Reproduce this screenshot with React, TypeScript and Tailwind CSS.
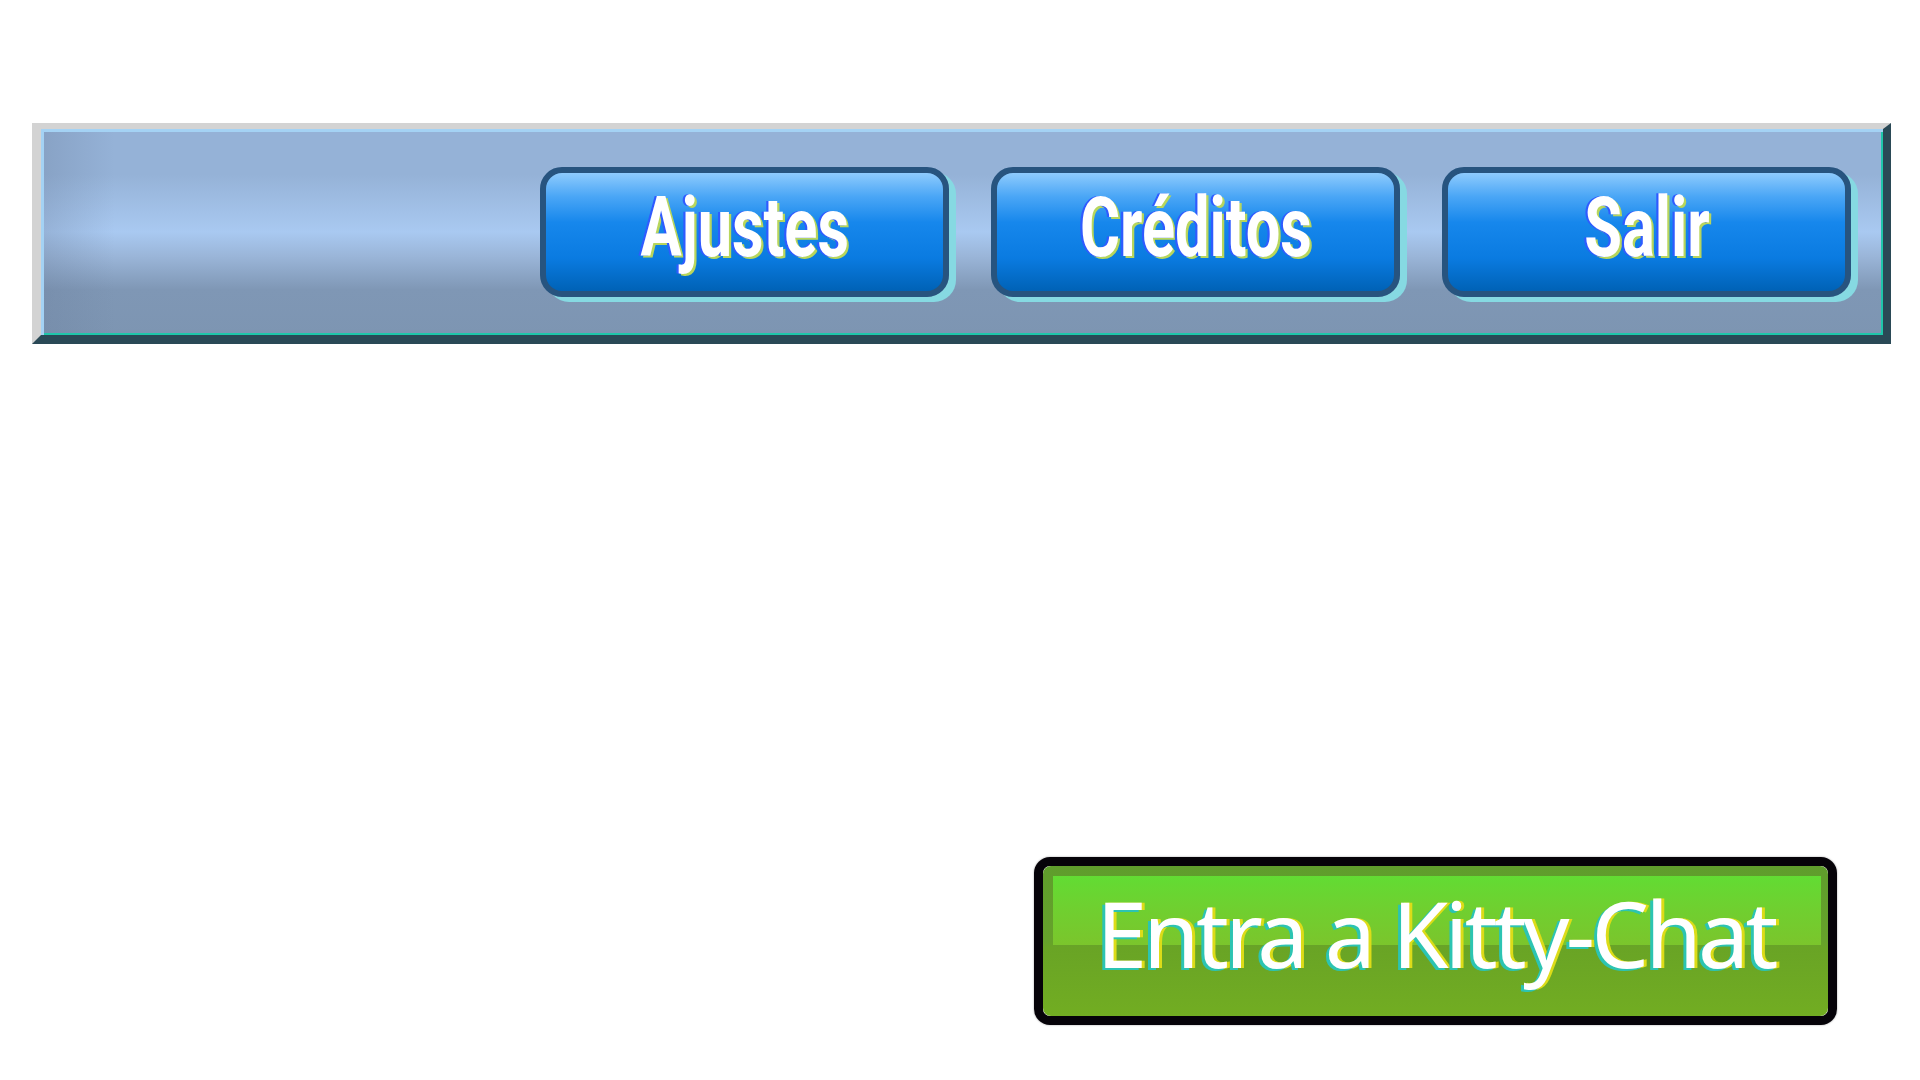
const menuItems = ["Ajustes", "Créditos", "Salir"];

const MenuButton = ({ label }: { label: string }) => (
  <button className="flex h-[130px] w-[409px] shrink-0 items-center justify-center rounded-[22px] border-[6px] border-[#27547f] bg-[linear-gradient(180deg,#8ecbfd_0%,#4aa6f6_20%,#1687ec_42%,#0a7be1_72%,#0062b6_100%)] shadow-[7px_5px_0_#86d9e2]">
    <span className="mb-[8px] inline-block scale-x-[0.73] font-['Roboto',sans-serif] text-[84px] font-bold leading-none text-white [text-shadow:-3px_0_#2f5bff,3px_2px_#b8d65c]">
      {label}
    </span>
  </button>
);

export default function App() {
  return (
    <div className="flex min-h-screen w-full flex-col bg-white pl-[32px] pr-[29px] pt-[123px]">
      <div className="h-[221px] w-full border-b-[9px] border-l-[9px] border-r-[8px] border-t-[6px] border-b-[#2a4956] border-l-[#d3d3d3] border-r-[#2a4956] border-t-[#d3d3d3]">
        <div className="flex h-full w-full items-center justify-end gap-[42px] bg-[linear-gradient(90deg,rgba(105,125,155,0.3)_0%,rgba(105,125,155,0)_4%),linear-gradient(180deg,#95b2d7_0%,#95b2d7_22%,#a9c9f1_50%,#9ab5d8_62%,#7f97b5_78%,#7d95b2_100%)] pr-[32px] shadow-[inset_3px_3px_0_#a4d2f4,inset_-2px_-2px_0_#1fc6aa]">
          {menuItems.map((item) => (
            <MenuButton key={item} label={item} />
          ))}
        </div>
      </div>

      <div className="ml-[1002px] mt-[513px] h-[168px] w-[803px] rounded-[16px] border-[9px] border-[#060309] shadow-[0_0_2px_#9a9a9a]">
        <div className="relative flex h-full w-full items-center justify-center overflow-hidden rounded-[8px] bg-[linear-gradient(180deg,#5f9d2c_0%,#66a22b_50%,#69a425_55%,#72ad22_100%)]">
          <div className="absolute left-[10px] right-[7px] top-[10px] h-[69px] bg-[linear-gradient(180deg,#62dc33_0%,#6fd030_45%,#7bc52c_100%)]" />
          <span className="relative pb-[16px] font-['Noto_Sans',sans-serif] text-[91px] font-normal leading-none tracking-[-0.04em] text-white [text-shadow:-3px_2px_#2cc4b2,3px_0_#dcdc18]">
            Entra a Kitty-Chat
          </span>
        </div>
      </div>
    </div>
  );
}
